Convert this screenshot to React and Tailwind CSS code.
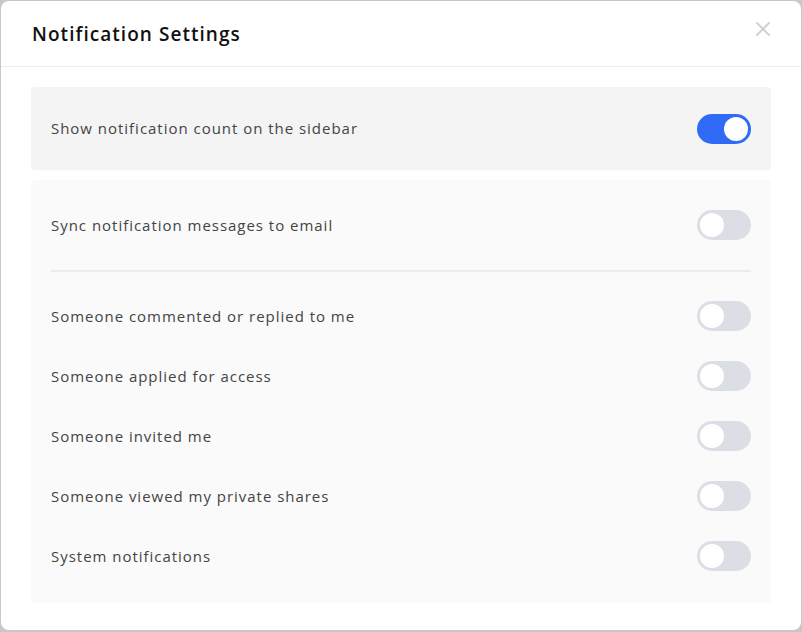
import React, { useState } from 'react';

function Toggle({ on, onChange }) {
  return (
    <button
      onClick={() => onChange(!on)}
      className={`relative w-[54px] h-[30px] rounded-full shrink-0 transition-colors ${on ? 'bg-[#2f6bf5]' : 'bg-[#dcdee5]'}`}
    >
      <span
        className={`absolute top-[3px] w-[24px] h-[24px] rounded-full bg-white transition-all ${on ? 'left-[27px]' : 'left-[3px]'}`}
      />
    </button>
  );
}

function Row({ label, on, onChange }) {
  return (
    <div className="flex items-center justify-between h-[60px] px-5">
      <span className="text-[15px] tracking-[0.065em] text-[#444]">{label}</span>
      <Toggle on={on} onChange={onChange} />
    </div>
  );
}

export default function App() {
  const [sidebar, setSidebar] = useState(true);
  const [email, setEmail] = useState(false);
  const [events, setEvents] = useState({
    commented: false,
    applied: false,
    invited: false,
    viewed: false,
    system: false,
  });

  const items = [
    ['commented', 'Someone commented or replied to me'],
    ['applied', 'Someone applied for access'],
    ['invited', 'Someone invited me'],
    ['viewed', 'Someone viewed my private shares'],
    ['system', 'System notifications'],
  ];

  return (
    <div className="w-[802px] h-[632px] bg-[#c8c8c8] p-[1px] pb-[2px]" style={{ fontFamily: '"Open Sans", "Liberation Sans", sans-serif' }}>
      <div className="bg-white rounded-[8px] h-full flex flex-col">
        <div className="h-[66px] border-b border-[#ebebf0] flex items-center justify-between pl-[31px] pr-[30px]">
          <h1 className="text-[19px] font-semibold tracking-[0.055em] text-[#111] mt-[2px]">Notification Settings</h1>
          <button className="text-[#d2d2d2] -mt-[10px]">
            <svg width="16" height="16" viewBox="0 0 16 16" fill="none" stroke="currentColor" strokeWidth="2" strokeLinecap="round">
              <path d="M2 2 L14 14 M14 2 L2 14" />
            </svg>
          </button>
        </div>
        <div className="px-[30px] pt-[20px] flex flex-col gap-[10px]">
          <div className="bg-[#f4f4f4] rounded-[4px] h-[83px] flex items-center justify-between px-5">
            <span className="text-[15px] tracking-[0.065em] text-[#444]">Show notification count on the sidebar</span>
            <Toggle on={sidebar} onChange={setSidebar} />
          </div>
          <div className="bg-[#fafafa] rounded-[4px] pt-[15px] pb-[17px]">
            <Row label="Sync notification messages to email" on={email} onChange={setEmail} />
            <div className="mx-5 mt-[15px] mb-[14px] h-[2px] bg-[#ebebf0]" />
            {items.map(([key, label]) => (
              <Row
                key={key}
                label={label}
                on={events[key]}
                onChange={v => setEvents({ ...events, [key]: v })}
              />
            ))}
          </div>
        </div>
      </div>
    </div>
  );
}
